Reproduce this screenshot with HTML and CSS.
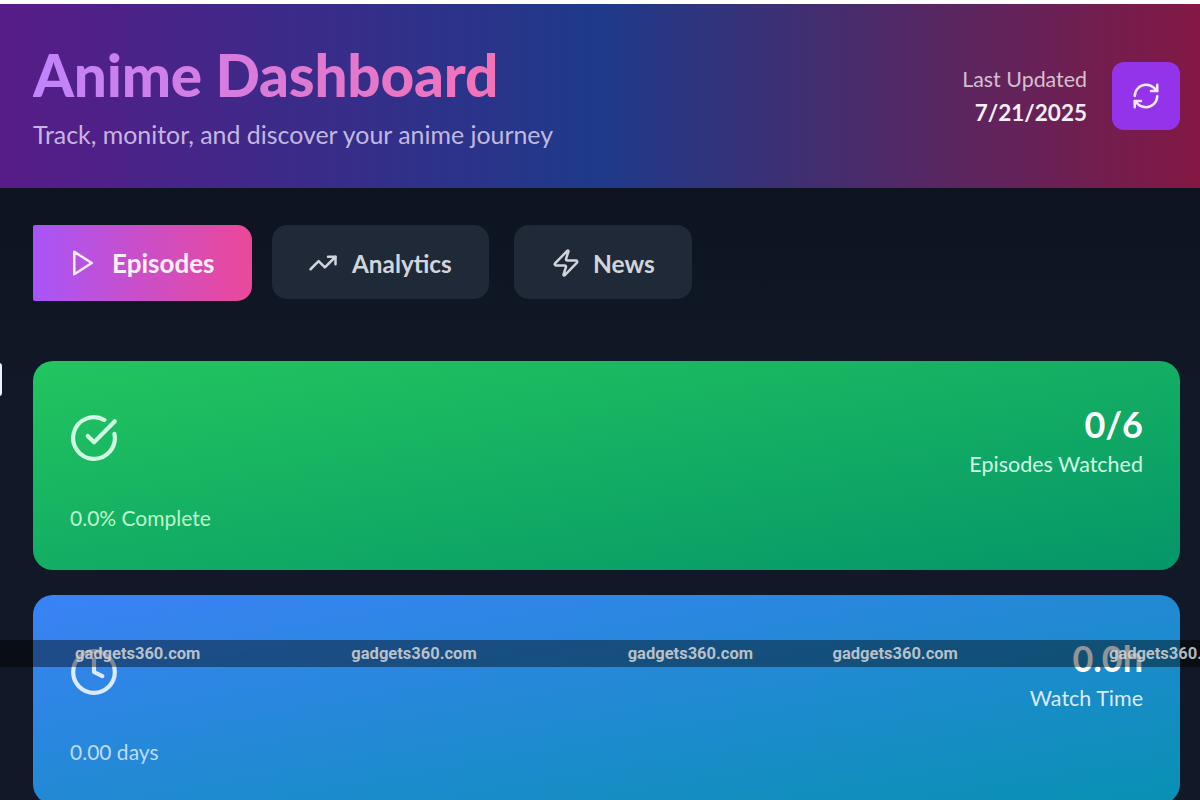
FILE: index.html
```html
<!DOCTYPE html>
<html lang="en">
<head>
<meta charset="utf-8">
<title>Anime Dashboard</title>
<link rel="stylesheet" href="styles.css">
</head>
<body>
<div class="page">
  <header class="header">
    <div class="brand">
      <h1 class="title">Anime Dashboard</h1>
      <p class="subtitle">Track, monitor, and discover your anime journey</p>
    </div>
    <div class="status">
      <div class="updated">
        <div class="updated-label">Last Updated</div>
        <div class="updated-date">7/21/2025</div>
      </div>
      <button class="refresh" type="button" aria-label="Refresh">
        <svg class="icon-refresh" viewBox="0 0 24 24"><path d="M3 12a9 9 0 0 1 9-9 9.75 9.75 0 0 1 6.74 2.74L21 8"/><path d="M21 3v5h-5"/><path d="M21 12a9 9 0 0 1-9 9 9.75 9.75 0 0 1-6.74-2.74L3 16"/><path d="M8 16H3v5"/></svg>
      </button>
    </div>
  </header>

  <nav class="tabs">
    <button class="tab tab-active" type="button">
      <svg class="tab-icon" viewBox="0 0 24 24"><polygon points="5 3 19 12 5 21 5 3"/></svg>
      <span>Episodes</span>
    </button>
    <button class="tab tab-analytics" type="button">
      <svg class="tab-icon" viewBox="0 0 24 24"><path d="M16 7h6v6"/><path d="m22 7-8.5 8.5-5-5L2 17"/></svg>
      <span>Analytics</span>
    </button>
    <button class="tab tab-news" type="button">
      <svg class="tab-icon" viewBox="0 0 24 24"><path d="M4 14a1 1 0 0 1-.78-1.63l9.9-10.2a.5.5 0 0 1 .86.46l-1.92 6.02A1 1 0 0 0 13 10h7a1 1 0 0 1 .78 1.63l-9.9 10.2a.5.5 0 0 1-.86-.46l1.92-6.02A1 1 0 0 0 11 14z"/></svg>
      <span>News</span>
    </button>
  </nav>

  <main class="cards">
    <section class="card card-green">
      <div class="card-top">
        <svg class="card-icon" viewBox="0 0 24 24"><path d="M21.801 10A10 10 0 1 1 17 3.335"/><path d="m9 11 3 3L22 4"/></svg>
        <div class="card-stat">
          <div class="card-value">0/6</div>
          <div class="card-label">Episodes Watched</div>
        </div>
      </div>
      <div class="card-note">0.0% Complete</div>
    </section>
    <section class="card card-blue">
      <div class="card-top">
        <svg class="card-icon" viewBox="0 0 24 24"><circle cx="12" cy="12" r="10"/><path d="M12 6v6l4 2"/></svg>
        <div class="card-stat">
          <div class="card-value">0.0h</div>
          <div class="card-label">Watch Time</div>
        </div>
      </div>
      <div class="card-note">0.00 days</div>
    </section>
  </main>

  <div class="edge-handle"></div>
  <div class="watermark">
    <span>gadgets360.com</span>
    <span>gadgets360.com</span>
    <span>gadgets360.com</span>
    <span class="wm-near">gadgets360.com</span>
    <span>gadgets360.com</span>
  </div>
</div>
</body>
</html>
```

FILE: styles.css
```css
* { box-sizing: border-box; }
html, body { margin: 0; padding: 0; height: 100%; background: #fff; }
body { overflow: hidden; font-family: Lato, "Open Sans", sans-serif; }

.page {
  position: relative;
  height: 800px;
  margin-top: 4px;
  overflow: hidden;
  background: linear-gradient(180deg, #0d1420 20%, #111827 50%, #111827 100%);
}

.header {
  display: flex;
  align-items: center;
  justify-content: space-between;
  height: 184px;
  padding: 0 20px 0 33px;
  background: linear-gradient(90deg, #581c87 0%, #1e3a8a 50%, #831843 100%);
}
.title {
  margin: 0;
  font-size: 58.5px;
  line-height: 64px;
  font-weight: 900;
  letter-spacing: -0.25px;
  background: linear-gradient(90deg, #c084fc, #f472b6);
  -webkit-background-clip: text;
  background-clip: text;
  color: transparent;
  width: fit-content;
}
.subtitle {
  margin: 12px 0 0;
  font-size: 24.9px;
  line-height: 32px;
  color: rgba(232, 222, 250, .8);
}
.status { display: flex; align-items: center; gap: 25px; }
.updated { padding-top: 3px; text-align: right; }
.updated-label { font-size: 21.4px; line-height: 28px; color: rgba(255, 255, 255, .72); }
.updated-date { margin-top: 3px; font-size: 22.5px; line-height: 34px; font-weight: 700; color: #f5eef5; }
.refresh {
  display: flex;
  align-items: center;
  justify-content: center;
  width: 68px;
  height: 68px;
  padding: 0;
  border: 0;
  border-radius: 12px;
  background: #9333ea;
}
.icon-refresh, .tab-icon, .card-icon {
  fill: none;
  stroke: currentColor;
  stroke-width: 2;
  stroke-linecap: round;
  stroke-linejoin: round;
}
.icon-refresh { width: 30px; height: 30px; color: #f6e9fb; }

.tabs {
  display: flex;
  align-items: flex-start;
  margin: 37px 0 0 33px;
  height: 76px;
}
.tab {
  display: flex;
  align-items: center;
  height: 74px;
  padding: 2px 0 0 36px;
  gap: 14px;
  border: 0;
  border-radius: 15px;
  background: #1f2937;
  color: #d1d5db;
  font-family: inherit;
  font-size: 24.3px;
  font-weight: 700;
}
.tab-icon { width: 30px; height: 30px; flex: none; }
.tab-active {
  width: 219px;
  height: 76px;
  padding: 0 0 0 35px;
  border-radius: 2px 15px 15px 2px;
  background: linear-gradient(90deg, #a855f7, #ec4899);
  color: #fdf0fa;
  font-size: 26px;
}
.tab-analytics { width: 217px; margin-left: 20px; }
.tab-news { width: 178px; margin-left: 25px; padding-left: 37px; gap: 12px; font-size: 24.6px; }

.cards {
  display: flex;
  flex-direction: column;
  gap: 25px;
  margin: 60px 20px 0 33px;
}
.card {
  display: flex;
  flex-direction: column;
  justify-content: space-between;
  flex: none;
  height: 209px;
  padding: 37px;
  border-radius: 20px;
}
.card-green { background: linear-gradient(170deg, #22c55e 0%, #059669 100%); }
.card-blue { background: linear-gradient(170deg, #3b82f6 0%, #0891b2 100%); }
.card-top { display: flex; align-items: flex-start; justify-content: space-between; }
.card-icon { width: 50px; height: 50px; margin: 15px 0 0 -1px; }
.card-green .card-icon { color: #d1fae5; }
.card-blue .card-icon { color: #dbeafe; }
.card-stat { padding-top: 2px; text-align: right; }
.card-value { font-size: 36px; line-height: 49px; font-weight: 700; color: #fff; }
.card-label { font-size: 21.5px; line-height: 30px; }
.card-green .card-label { color: #d1fae5; }
.card-blue .card-label { color: #dbeafe; }
.card-note { font-size: 21px; line-height: 30px; }
.card-green .card-note { color: #bbf7d0; }
.card-blue .card-note { color: #bfdbfe; }

.edge-handle {
  position: absolute;
  left: -6px;
  top: 359px;
  width: 8px;
  height: 33px;
  border-radius: 3px;
  background: #eef2ff;
}
.watermark {
  position: absolute;
  left: 0;
  right: 0;
  top: 636px;
  height: 27px;
  display: flex;
  align-items: center;
  gap: 151px;
  padding-left: 75px;
  white-space: nowrap;
  overflow: hidden;
  background: rgba(0, 0, 0, .42);
  font-family: Roboto, sans-serif;
  font-size: 16.5px;
  font-weight: 700;
  color: rgba(215, 215, 215, .85);
}
.wm-near { margin-left: -71.5px; }
```
